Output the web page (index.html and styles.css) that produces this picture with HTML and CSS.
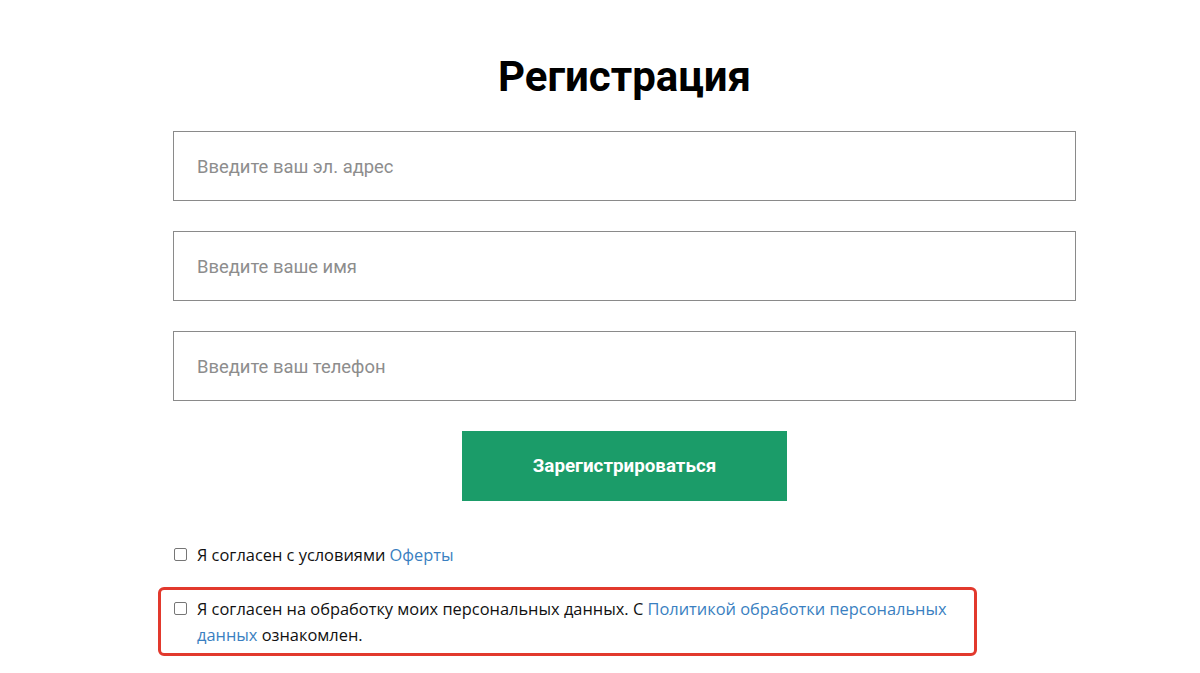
FILE: index.html
```html
<!DOCTYPE html>
<html lang="ru">
<head>
<meta charset="utf-8">
<title>Регистрация</title>
<link rel="stylesheet" href="styles.css">
</head>
<body>
<main class="form-wrap">
  <h1 class="title">Регистрация</h1>
  <form class="form">
    <input class="field" type="email" placeholder="Введите ваш эл. адрес">
    <input class="field" type="text" placeholder="Введите ваше имя">
    <input class="field" type="tel" placeholder="Введите ваш телефон">
    <button class="submit" type="button">Зарегистрироваться</button>
    <label class="agree agree-first">
      <input class="check" type="checkbox">
      <span>Я согласен с условиями <a href="#" class="link">Оферты</a></span>
    </label>
    <div class="highlight">
      <label class="agree">
        <input class="check" type="checkbox">
        <span>Я согласен на обработку моих персональных данных. С <a href="#" class="link">Политикой обработки персональных данных</a> ознакомлен.</span>
      </label>
    </div>
  </form>
</main>
</body>
</html>
```
FILE: styles.css
```css
* { box-sizing: border-box; }
html, body { margin: 0; padding: 0; background: #fff; }
body { font-family: Roboto, "Noto Sans", sans-serif; color: #000; }

.form-wrap {
  width: 903px;
  margin-left: 173px;
  padding-top: 51px;
}

.title {
  margin: 0;
  text-align: center;
  font-family: Roboto, sans-serif;
  font-weight: 700;
  font-size: 42px;
  line-height: 52px;
  color: #000;
}

.form {
  display: flex;
  flex-direction: column;
  margin-top: 28px;
}

.field {
  height: 70px;
  width: 100%;
  border: 1px solid #8a8a8a;
  border-radius: 0;
  padding: 0 23px;
  font-family: Roboto, sans-serif;
  font-size: 18.4px;
  color: #333;
  margin-bottom: 30px;
  outline: none;
}
.field::placeholder { color: #8d8d8d; opacity: 1; }

.submit {
  align-self: center;
  width: 325px;
  height: 70px;
  border: none;
  background: #1b9c69;
  color: #fff;
  font-family: Roboto, sans-serif;
  font-weight: 700;
  font-size: 18.8px;
  cursor: pointer;
}

.agree {
  display: flex;
  align-items: flex-start;
  gap: 10px;
  font-family: "Open Sans", sans-serif;
  font-size: 16.4px;
  line-height: 26px;
  color: #111;
}
.agree-first { margin-top: 41px; }

.check {
  appearance: none;
  -webkit-appearance: none;
  flex: none;
  width: 13px;
  height: 13px;
  margin: 6px 0 0 1px;
  border: 1px solid #767676;
  border-radius: 2px;
  background: #fff;
}

.link { color: #3a7fc1; text-decoration: none; }

.highlight {
  margin-top: 19px;
  margin-left: -15px;
  width: 819px;
  border: 3px solid #e2392d;
  border-radius: 6px;
  padding: 6px 20px 5px 12px;
}
```
